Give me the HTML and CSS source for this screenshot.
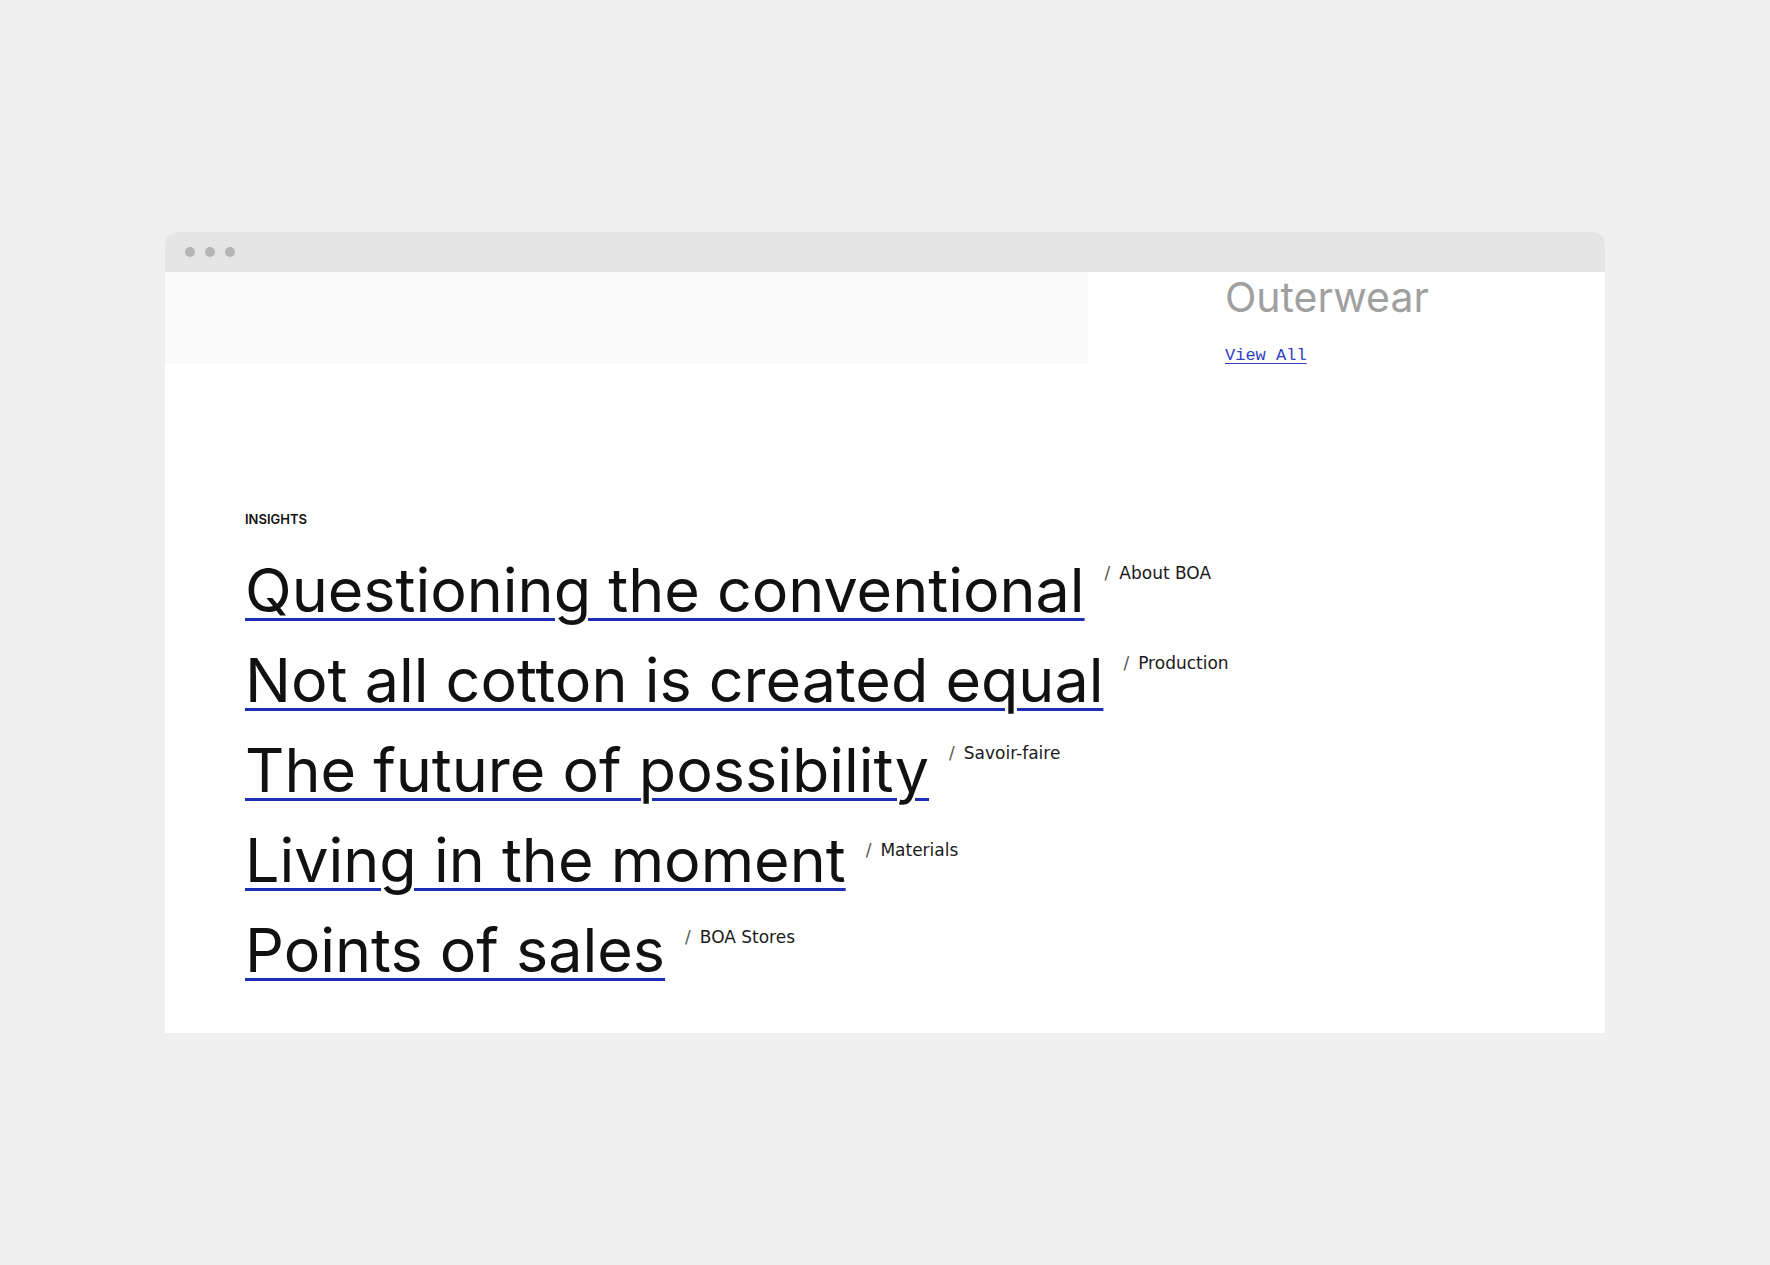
FILE: index.html
```html
<!DOCTYPE html>
<html lang="en">
<head>
<meta charset="utf-8">
<title>Insights</title>
<link rel="stylesheet" href="styles.css">
</head>
<body>
<div class="stage">
  <div class="window">
    <div class="titlebar">
      <span class="dot"></span><span class="dot"></span><span class="dot"></span>
    </div>
    <div class="hero">
      <div class="hero-media"></div>
      <div class="hero-text">
        <h2 class="hero-title">Outerwear</h2>
        <a class="view-all" href="#">View All</a>
      </div>
    </div>
    <section class="insights">
      <div class="eyebrow">INSIGHTS</div>
      <ul class="list">
        <li class="row"><a class="headline" href="#">Questioning the conventional</a><span class="cat"><span class="slash">/</span>About BOA</span></li>
        <li class="row"><a class="headline" href="#">Not all cotton is created equal</a><span class="cat"><span class="slash">/</span>Production</span></li>
        <li class="row"><a class="headline" href="#">The future of possibility</a><span class="cat"><span class="slash">/</span>Savoir-faire</span></li>
        <li class="row"><a class="headline" href="#">Living in the moment</a><span class="cat cat-low"><span class="slash">/</span>Materials</span></li>
        <li class="row"><a class="headline" href="#">Points of sales</a><span class="cat cat-mid"><span class="slash">/</span>BOA Stores</span></li>
      </ul>
    </section>
  </div>
</div>
</body>
</html>
```

FILE: styles.css
```css
* { box-sizing: border-box; }
html, body { margin: 0; padding: 0; }
body {
  background: #f0f0f0;
  font-family: Inter, "Liberation Sans", sans-serif;
  color: #111;
}
.stage {
  padding: 232px 165px 0 165px;
  height: 1265px;
}
.window {
  width: 1440px;
  background: #fff;
  border-radius: 12px 12px 0 0;
  overflow: hidden;
}
.titlebar {
  height: 40px;
  background: #e5e5e5;
  display: flex;
  align-items: center;
  gap: 10px;
  padding-left: 20px;
}
.dot {
  width: 10px;
  height: 10px;
  border-radius: 50%;
  background: #b4b4b4;
}
.hero {
  display: flex;
  height: 92px;
}
.hero-media {
  width: 923px;
  background: #fafafa;
}
.hero-text {
  padding: 5px 0 0 137px;
  display: flex;
  flex-direction: column;
  align-items: flex-start;
}
.hero-title {
  margin: 0;
  font-size: 41px;
  line-height: 40px;
  font-weight: 400;
  color: #a0a0a0;
  letter-spacing: 0;
}
.view-all {
  margin-top: 29px;
  font-family: "Liberation Mono", "DejaVu Sans Mono", monospace;
  font-size: 17px;
  line-height: 20px;
  color: #3041c4;
  text-decoration: underline;
  text-underline-offset: 3px;
}
.insights {
  padding: 147px 0 38px 80px;
}
.eyebrow {
  font-size: 13px;
  line-height: 16px;
  font-weight: 600;
  color: #111;
  margin-bottom: 18px;
}
.list {
  list-style: none;
  margin: 0;
  padding: 0;
}
.row {
  display: flex;
  align-items: flex-start;
  height: 90px;
}
.headline {
  font-size: 61px;
  line-height: 90px;
  font-weight: 400;
  color: #111;
  letter-spacing: 0;
  text-decoration: underline;
  text-decoration-color: #1b2eb4;
  text-decoration-thickness: 3px;
  text-underline-offset: 6px;
  text-decoration-skip-ink: auto;
}
.cat {
  margin-left: 20px;
  padding-top: 18px;
  font-family: "DejaVu Sans", sans-serif;
  font-size: 17px;
  line-height: 20px;
  color: #1a1a1a;
  white-space: nowrap;
}
.cat-low { padding-top: 25px; }
.cat-mid { padding-top: 22px; }
.slash {
  color: #555;
  margin-right: 9px;
}
```
